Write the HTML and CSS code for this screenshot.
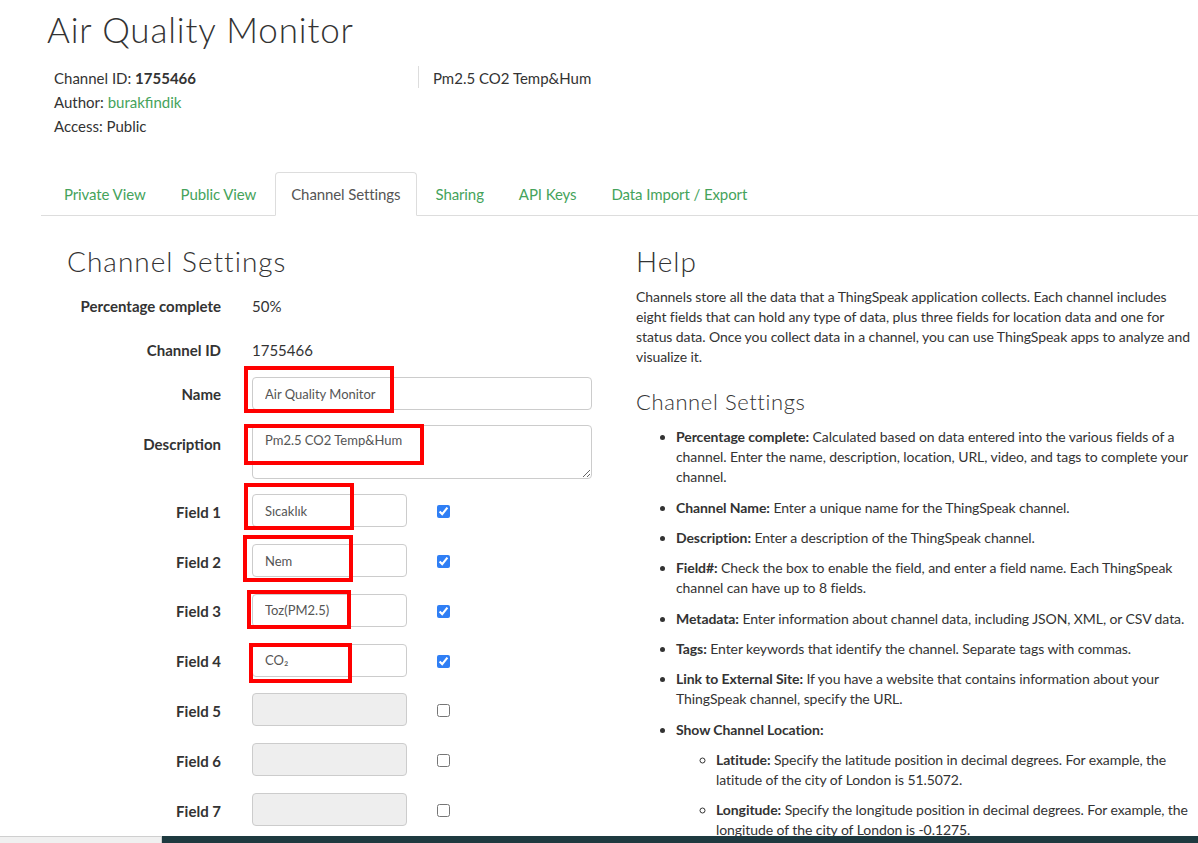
FILE: index.html
```html
<!DOCTYPE html>
<html lang="en">
<head>
<meta charset="utf-8">
<title>Air Quality Monitor - ThingSpeak</title>
<link rel="stylesheet" href="styles.css">
</head>
<body>
<div class="page">
  <header class="channel-header">
    <h1 class="channel-title">Air Quality Monitor</h1>
    <div class="channel-meta">
      <div class="meta-left">
        <div>Channel ID: <strong>1755466</strong></div>
        <div>Author: <a class="link" href="#">burakfindik</a></div>
        <div>Access: Public</div>
      </div>
      <div class="meta-right">Pm2.5 CO2 Temp&amp;Hum</div>
    </div>
  </header>

  <ul class="tabs">
    <li><a href="#">Private View</a></li>
    <li><a href="#">Public View</a></li>
    <li class="active"><a href="#">Channel Settings</a></li>
    <li><a href="#">Sharing</a></li>
    <li><a href="#">API Keys</a></li>
    <li><a href="#">Data Import / Export</a></li>
  </ul>

  <main class="content">
    <section class="settings">
      <h2 class="section-title">Channel Settings</h2>
      <div class="form-row static">
        <div class="form-label">Percentage complete</div>
        <div class="form-value">50%</div>
      </div>
      <div class="form-row static">
        <div class="form-label">Channel ID</div>
        <div class="form-value">1755466</div>
      </div>
      <div class="form-row name-row">
        <label class="form-label">Name</label>
        <div class="control">
          <input class="text-input wide" type="text" value="Air Quality Monitor">
          <span class="mark mark-name"></span>
        </div>
      </div>
      <div class="form-row desc-row">
        <label class="form-label">Description</label>
        <div class="control">
          <textarea class="text-input wide area">Pm2.5 CO2 Temp&amp;Hum</textarea>
          <span class="mark mark-desc"></span>
        </div>
      </div>
      <div class="form-row field-row">
        <label class="form-label">Field 1</label>
        <div class="control">
          <input class="text-input field" type="text" value="Sıcaklık">
          <span class="mark mark-f1"></span>
        </div>
        <input class="check" type="checkbox" checked>
      </div>
      <div class="form-row field-row">
        <label class="form-label">Field 2</label>
        <div class="control">
          <input class="text-input field" type="text" value="Nem">
          <span class="mark mark-f2"></span>
        </div>
        <input class="check" type="checkbox" checked>
      </div>
      <div class="form-row field-row">
        <label class="form-label">Field 3</label>
        <div class="control">
          <input class="text-input field" type="text" value="Toz(PM2.5)">
          <span class="mark mark-f3"></span>
        </div>
        <input class="check" type="checkbox" checked>
      </div>
      <div class="form-row field-row">
        <label class="form-label">Field 4</label>
        <div class="control">
          <input class="text-input field" type="text" value="CO₂">
          <span class="mark mark-f4"></span>
        </div>
        <input class="check" type="checkbox" checked>
      </div>
      <div class="form-row field-row">
        <label class="form-label">Field 5</label>
        <div class="control"><input class="text-input field" type="text" disabled></div>
        <input class="check" type="checkbox">
      </div>
      <div class="form-row field-row">
        <label class="form-label">Field 6</label>
        <div class="control"><input class="text-input field" type="text" disabled></div>
        <input class="check" type="checkbox">
      </div>
      <div class="form-row field-row">
        <label class="form-label">Field 7</label>
        <div class="control"><input class="text-input field" type="text" disabled></div>
        <input class="check" type="checkbox">
      </div>
    </section>

    <aside class="help">
      <h2 class="section-title">Help</h2>
      <p class="help-text">Channels store all the data that a ThingSpeak application collects. Each channel includes eight fields that can hold any type of data, plus three fields for location data and one for status data. Once you collect data in a channel, you can use ThingSpeak apps to analyze and visualize it.</p>
      <h3 class="sub-title">Channel Settings</h3>
      <ul class="help-list">
        <li><strong>Percentage complete:</strong> Calculated based on data entered into the various fields of a channel. Enter the name, description, location, URL, video, and tags to complete your channel.</li>
        <li><strong>Channel Name:</strong> Enter a unique name for the ThingSpeak channel.</li>
        <li><strong>Description:</strong> Enter a description of the ThingSpeak channel.</li>
        <li><strong>Field#:</strong> Check the box to enable the field, and enter a field name. Each ThingSpeak channel can have up to 8 fields.</li>
        <li><strong>Metadata:</strong> Enter information about channel data, including JSON, XML, or CSV data.</li>
        <li><strong>Tags:</strong> Enter keywords that identify the channel. Separate tags with commas.</li>
        <li><strong>Link to External Site:</strong> If you have a website that contains information about your ThingSpeak channel, specify the URL.</li>
        <li><strong>Show Channel Location:</strong>
          <ul class="help-sublist">
            <li><strong>Latitude:</strong> Specify the latitude position in decimal degrees. For example, the latitude of the city of London is 51.5072.</li>
            <li><strong>Longitude:</strong> Specify the longitude position in decimal degrees. For example, the longitude of the city of London is -0.1275.</li>
          </ul>
        </li>
      </ul>
    </aside>
  </main>

  <div class="bottom-strip">
    <div class="strip-left"></div>
    <div class="strip-right"></div>
  </div>
</div>
</body>
</html>
```
FILE: styles.css
```css
html, body {
  margin: 0;
  padding: 0;
  height: 100%;
  overflow: hidden;
  background: #fff;
}

body {
  font-family: "Lato", "Open Sans", sans-serif;
  font-size: 15px;
  color: #333;
}

.page {
  height: 843px;
  overflow: hidden;
  position: relative;
}

.channel-header {
  padding-left: 47px;
}

.channel-title {
  margin: 10px 0 0;
  font-size: 35px;
  line-height: 1.1;
  font-weight: 300;
  color: #333;
  letter-spacing: 0.85px;
}

.channel-meta {
  display: flex;
  margin-top: 17px;
  margin-left: 7px;
  line-height: 24px;
}

.meta-left {
  width: 364px;
}

.meta-right {
  border-left: 1px solid #ddd;
  padding-left: 14px;
  height: 22px;
  line-height: 24px;
}

.link {
  color: #45a35b;
  text-decoration: none;
}

.tabs {
  list-style: none;
  margin: 34px 0 0 41px;
  padding: 0 0 0 6.5px;
  display: flex;
  border-bottom: 1px solid #ddd;
}

.tabs li {
  margin-right: 2px;
  margin-bottom: -1px;
}

.tabs a {
  display: block;
  padding: 11px 15.5px;
  line-height: 20px;
  border: 1px solid transparent;
  border-radius: 4px 4px 0 0;
  color: #45a35b;
  text-decoration: none;
  letter-spacing: -0.1px;
}

.tabs li.active a {
  color: #555;
  border-color: #ddd;
  border-bottom-color: #fff;
  background: #fff;
}

.content {
  display: flex;
  padding-left: 67px;
}

.settings {
  width: 569px;
  flex: none;
}

.help {
  width: 556px;
  flex: none;
}

.section-title {
  margin: 30px 0 0;
  font-size: 28px;
  line-height: 1.1;
  font-weight: 300;
  color: #333;
  letter-spacing: 1px;
}

.form-row {
  display: flex;
  align-items: center;
}

.form-label {
  width: 154px;
  flex: none;
  margin-right: 31px;
  text-align: right;
  font-weight: 700;
  line-height: 22px;
}

.form-row.static {
  height: 34px;
  margin-bottom: 10px;
}

.settings .section-title + .form-row {
  margin-top: 13px;
}

.control {
  position: relative;
}

.text-input {
  box-sizing: border-box;
  height: 33px;
  border: 1px solid #ccc;
  border-radius: 4px;
  padding: 6px 12px;
  font-family: "Lato", "Open Sans", sans-serif;
  font-size: 13px;
  color: #555;
  background: #fff;
  display: block;
}

.text-input:disabled {
  background: #eee;
}

.text-input.wide {
  width: 340px;
}

.text-input.area {
  height: 54px;
  resize: vertical;
}

.text-input.field {
  width: 155px;
}

.name-row {
  margin-bottom: 15px;
}

.desc-row {
  align-items: flex-start;
  margin-bottom: 15px;
}

.desc-row .form-label {
  padding-top: 8px;
}

.field-row {
  margin-bottom: 16.8px;
}

.field-row .form-label {
  padding-top: 2px;
}

.check {
  width: 13px;
  height: 13px;
  margin: 2px 0 0 30px;
  accent-color: #2f7ff5;
}

.mark {
  position: absolute;
  box-sizing: border-box;
  border: 4px solid #ff0000;
  pointer-events: none;
}

.mark-name { left: -8px; top: -11px; width: 150px; height: 47px; }
.mark-desc { left: -8px; top: -1px; width: 180px; height: 41px; }
.mark-f1 { left: -8px; top: -11px; width: 110px; height: 47px; }
.mark-f2 { left: -9px; top: -9px; width: 110px; height: 47px; }
.mark-f3 { left: -5px; top: -4px; width: 104px; height: 39px; }
.mark-f4 { left: -3px; top: -1px; width: 103px; height: 40px; }

.help {
  font-size: 14px;
  letter-spacing: -0.08px;
}

.help .section-title {
  letter-spacing: 1px;
}

.help-text {
  margin: 11px 0 0;
  line-height: 20px;
}

.sub-title {
  margin: 23px 0 0;
  font-size: 22px;
  line-height: 1.1;
  font-weight: 300;
  color: #333;
  letter-spacing: 0.6px;
}

.help-list {
  margin: 13px 0 0;
  padding-left: 40px;
  line-height: 20px;
}

.help-list li {
  margin-bottom: 10.3px;
}

.help-sublist {
  list-style: circle;
  margin: 10px 0 0;
  padding-left: 40px;
}

.bottom-strip {
  position: absolute;
  left: 0;
  right: 0;
  bottom: 0;
  height: 7px;
  display: flex;
}

.strip-left {
  width: 161px;
  background: #f0f0f0;
  border-top: 1px solid #cfcfcf;
  border-right: 1px solid #cfcfcf;
}

.strip-right {
  flex: 1;
  background: #1e3a40;
}
```
